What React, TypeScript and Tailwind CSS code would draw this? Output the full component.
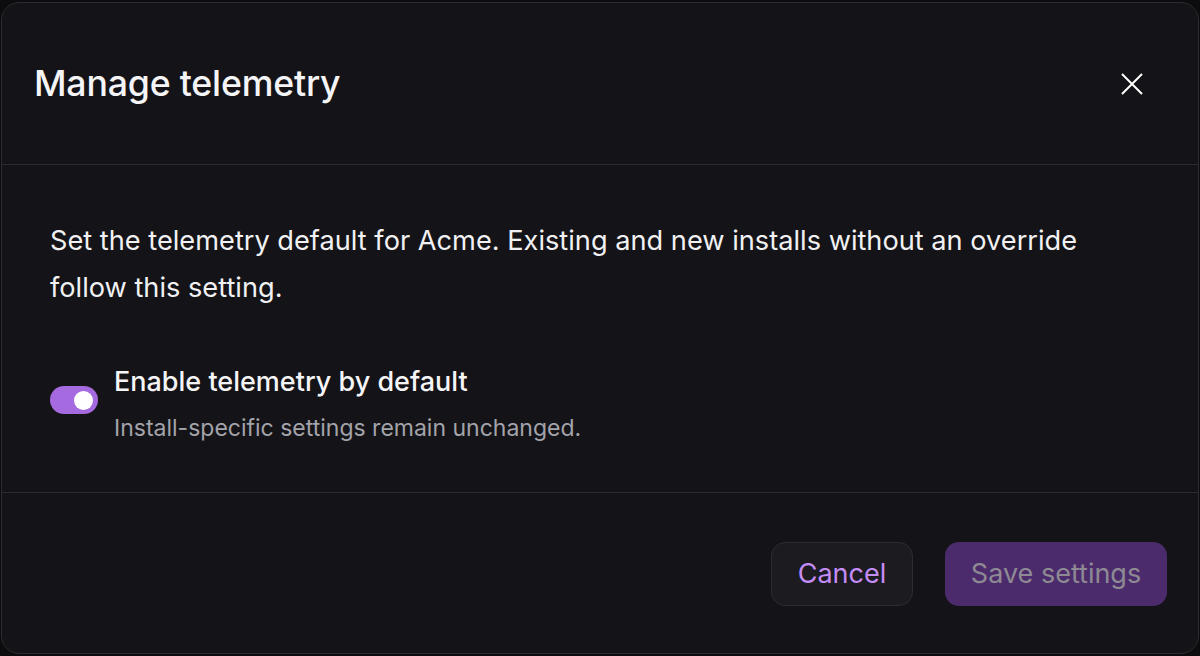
export default function App() {
  return (
    <div
      className="flex h-[656px] w-[1200px] flex-col bg-[#0c0b0e] pt-[2px] pb-[2px] px-[1px] text-white"
      style={{ fontFamily: "Inter, 'Noto Sans', sans-serif" }}
    >
      <div className="flex flex-1 flex-col rounded-[18px] border border-[#2c2b30] bg-[#141317]">
        {/* Header */}
        <header className="flex h-[162px] items-center justify-between border-b border-[#2c2b30] pl-[32px] pr-[54px]">
          <h2 className="text-[35.7px] font-medium leading-none tracking-[-0.2px] text-[#f5f5f7]">Manage telemetry</h2>
          <button className="flex h-[24px] w-[24px] items-center justify-center text-white">
            <svg width="22" height="22" viewBox="0 0 22 22" fill="none" stroke="currentColor" strokeWidth="2">
              <path d="M1 1L21 21M21 1L1 21" />
            </svg>
          </button>
        </header>

        {/* Body */}
        <section className="flex h-[328px] flex-col border-b border-[#2c2b30] pl-[48px] pr-[100px] pt-[52px]">
          <p className="text-[27.2px] leading-[47px] text-[#f1f1f3]">
            Set the telemetry default for Acme. Existing and new installs without an override follow this setting.
          </p>
          <div className="mt-[53px] flex items-start gap-[16px]">
            <div className="mt-[22px] flex h-[28px] w-[48px] items-center justify-end rounded-full bg-[#a56ae0] px-[5px]">
              <div className="h-[19px] w-[19px] rounded-full bg-white" />
            </div>
            <div className="flex flex-col">
              <span className="text-[27px] leading-[36px] font-medium text-[#f5f5f7]">Enable telemetry by default</span>
              <span className="mt-[12px] text-[23px] leading-[32px] text-[#a3a3aa]">
                Install-specific settings remain unchanged.
              </span>
            </div>
          </div>
        </section>

        {/* Footer */}
        <footer className="flex flex-1 items-center justify-end gap-[32px] pr-[31px] pt-[2px]">
          <button className="h-[64px] w-[142px] rounded-[14px] border border-[#2c2b30] bg-[#1c1b20] text-[27px] text-[#c48cf7]">
            Cancel
          </button>
          <button className="h-[64px] w-[222px] rounded-[14px] bg-[#4c2b6d] text-[27px] text-[#8e8a93]">
            Save settings
          </button>
        </footer>
      </div>
    </div>
  );
}
